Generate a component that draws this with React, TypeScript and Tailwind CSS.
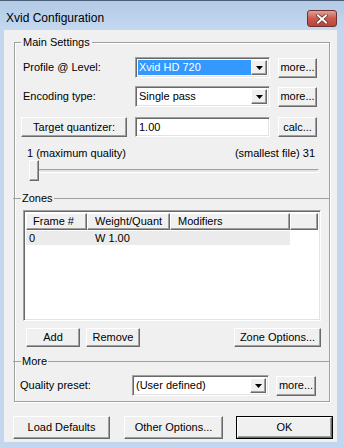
import React from 'react';

const raised =
  'bg-[#f0f0f0] border border-t-white border-l-white border-r-[#696969] border-b-[#696969] shadow-[inset_-1px_-1px_0_#a0a0a0] flex items-center justify-center';
const sunken =
  'bg-white border border-t-[#a0a0a0] border-l-[#a0a0a0] border-r-white border-b-white shadow-[inset_1px_1px_0_#696969,inset_-1px_-1px_0_#e3e3e3]';

const heights: Record<number, string> = {
  19: 'h-[19px]',
  20: 'h-[20px]',
  21: 'h-[21px]',
  23: 'h-[23px]',
};

function Btn({ w, h = 20, children }: { w: string; h?: number; children: React.ReactNode }) {
  return <div className={`${raised} ${w} ${heights[h]}`}>{children}</div>;
}

function Arrow() {
  return (
    <svg width="7" height="4" viewBox="0 0 7 4">
      <polygon points="0,0 7,0 3.5,4" fill="#000" />
    </svg>
  );
}

function Combo({ w, text, selected }: { w: string; text: string; selected?: boolean }) {
  return (
    <div className={`${sunken} ${w} h-[21px] flex p-[2px]`}>
      <div
        className={`flex-1 flex items-center pl-[1px] ${
          selected ? 'bg-[#3399ff] text-white' : ''
        }`}
      >
        {text}
      </div>
      <div className={`${raised} w-[16px]`}>
        <Arrow />
      </div>
    </div>
  );
}

function Separator({ label }: { label: string }) {
  return (
    <div className="flex items-center h-[13px] -ml-[2px] -mr-[1px]">
      <div className="w-[8px] h-px bg-[#a0a0a0]" />
      <span className="px-[1px] leading-[13px]">{label}</span>
      <div className="flex-1 h-px bg-[#a0a0a0]" />
    </div>
  );
}

export default function App() {
  return (
    <div className="w-[344px] h-[448px] bg-[#c2d7ee] flex flex-col font-['Liberation_Sans',Arial,sans-serif] text-[11px] text-black overflow-hidden">
      {/* Title bar */}
      <div className="h-[30px] border-t border-[#4a5f78] bg-gradient-to-b from-[#b3cae5] to-[#c4d9f0] flex items-start">
        <div className="pl-[6px] pt-[10px] text-[12px] leading-[14px]">Xvid Configuration</div>
        <div className="ml-auto mr-[7px] mt-[9px] w-[30px] h-[17px] rounded-[3px] border border-[#6d3033] bg-gradient-to-b from-[#e0a195] via-[#c95a4c] to-[#b8463a] flex items-center justify-center">
          <svg width="12" height="10" viewBox="0 0 12 10">
            <path d="M2 1.5 L10 8.5 M10 1.5 L2 8.5" stroke="#5a2a2a" strokeWidth="3.4" strokeLinecap="square" />
            <path d="M2 1.5 L10 8.5 M10 1.5 L2 8.5" stroke="#fff" strokeWidth="2" strokeLinecap="square" />
          </svg>
        </div>
      </div>

      {/* Client area */}
      <div className="ml-[4px] w-[333px] h-[412px] bg-[#f0f0f0] pt-[12px]">
        {/* Group box */}
        <div className="relative ml-[10px] w-[316px] h-[360px] border border-[#a0a0a0] shadow-[inset_1px_1px_0_#fff,1px_1px_0_#fff]">
          <span className="absolute -top-[7px] left-[6px] bg-[#f0f0f0] px-[2px] leading-[13px]">
            Main Settings
          </span>

          {/* Profile row */}
          <div className="mt-[14px] flex items-center">
            <div className="pl-[8px] w-[120px]">Profile @ Level:</div>
            <Combo w="w-[135px]" text="Xvid HD 720" selected />
            <div className="ml-[8px]">
              <Btn w="w-[39px]">more...</Btn>
            </div>
          </div>

          {/* Encoding row */}
          <div className="mt-[8px] flex items-center">
            <div className="pl-[8px] w-[120px]">Encoding type:</div>
            <Combo w="w-[135px]" text="Single pass" />
            <div className="ml-[8px]">
              <Btn w="w-[39px]">more...</Btn>
            </div>
          </div>

          {/* Target quantizer row */}
          <div className="mt-[10px] flex items-center">
            <div className="pl-[6px] w-[120px]">
              <Btn w="w-[106px]">Target quantizer:</Btn>
            </div>
            <div className={`${sunken} w-[135px] h-[20px] flex items-center pl-[3px]`}>1.00</div>
            <div className="ml-[8px]">
              <Btn w="w-[39px]">calc...</Btn>
            </div>
          </div>

          {/* Slider */}
          <div className="mt-[10px] flex justify-between pl-[12px] pr-[14px] leading-[13px]">
            <span>1 (maximum quality)</span>
            <span>(smallest file) 31</span>
          </div>
          <div className="relative ml-[14px] w-[290px] h-[21px]">
            <div className="absolute top-[9px] left-0 right-0 h-[4px] border border-t-[#a0a0a0] border-l-[#a0a0a0] border-r-white border-b-white bg-[#e3e3e3]" />
            <div className={`${raised} absolute top-0 left-0 w-[10px] h-[21px]`} />
          </div>

          {/* Zones */}
          <div className="mt-[11px]">
            <Separator label="Zones" />
          </div>
          <div className={`${sunken} mt-[5px] ml-[8px] w-[298px] h-[111px] p-[2px] flex flex-col`}>
            <div className="flex h-[17px] leading-[15px]">
              <div className={`${raised} !justify-start w-[61px] pl-[6px]`}>Frame #</div>
              <div className={`${raised} !justify-start w-[83px] pl-[7px]`}>Weight/Quant</div>
              <div className={`${raised} !justify-start w-[120px] pl-[7px]`}>Modifiers</div>
              <div className={`${raised} flex-1`} />
            </div>
            <div className="mt-[1px] flex h-[14px] w-[264px] items-center bg-[#ebebeb]">
              <div className="w-[61px] pl-[3px]">0</div>
              <div className="pl-[8px]">W 1.00</div>
            </div>
          </div>

          {/* Zone buttons */}
          <div className="mt-[7px] flex items-center">
            <div className="ml-[11px]">
              <Btn w="w-[54px]" h={19}>Add</Btn>
            </div>
            <div className="ml-[6px]">
              <Btn w="w-[54px]" h={19}>Remove</Btn>
            </div>
            <div className="ml-auto mr-[8px]">
              <Btn w="w-[87px]" h={19}>Zone Options...</Btn>
            </div>
          </div>

          {/* More */}
          <div className="mt-[8px]">
            <Separator label="More" />
          </div>
          <div className="mt-[7px] flex items-center">
            <div className="pl-[5px] w-[117px]">Quality preset:</div>
            <Combo w="w-[137px]" text="(User defined)" />
            <div className="ml-[7px]">
              <Btn w="w-[40px]">more...</Btn>
            </div>
          </div>
        </div>

        {/* Bottom buttons */}
        <div className="mt-[14px] flex items-center">
          <div className="ml-[9px]">
            <Btn w="w-[97px]" h={23}>Load Defaults</Btn>
          </div>
          <div className="ml-[14px]">
            <Btn w="w-[99px]" h={23}>Other Options...</Btn>
          </div>
          <div className="ml-[13px] border border-black">
            <Btn w="w-[95px]" h={21}>OK</Btn>
          </div>
        </div>
      </div>
    </div>
  );
}
